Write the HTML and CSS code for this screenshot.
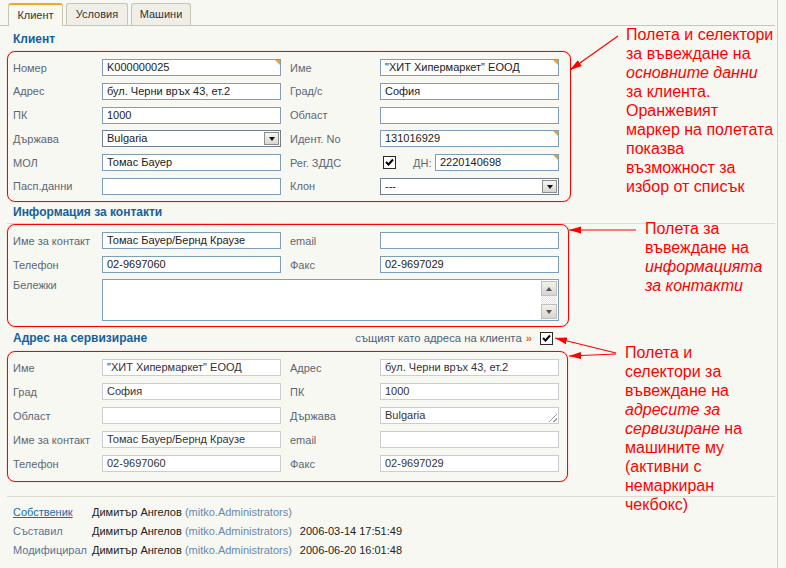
FILE: index.html
```html
<!DOCTYPE html>
<html lang="bg">
<head>
<meta charset="utf-8">
<title>Клиент</title>
<link rel="stylesheet" href="styles.css">
</head>
<body>
<div class="page">
  <div class="tabs">
    <div class="tab active">Клиент</div>
    <div class="tab w62">Условия</div>
    <div class="tab w60">Машини</div>
  </div>
  <div class="content">
    <div class="sec-head h1"><h2>Клиент</h2></div>
    <div class="box b1">
      <div class="grid">
        <span class="lbl">Номер</span><div class="in mark">K000000025</div>
        <span class="lbl">Име</span><div class="in mark">"ХИТ Хипермаркет" ЕООД</div>

        <span class="lbl">Адрес</span><div class="in">бул. Черни връх 43, ет.2</div>
        <span class="lbl">Град/с</span><div class="in">София</div>

        <span class="lbl">ПК</span><div class="in">1000</div>
        <span class="lbl">Област</span><div class="in"></div>

        <span class="lbl">Държава</span><div class="in sel">Bulgaria<span class="dd"></span></div>
        <span class="lbl">Идент. No</span><div class="in mark">131016929</div>

        <span class="lbl">МОЛ</span><div class="in">Томас Бауер</div>
        <span class="lbl">Рег. ЗДДС</span>
        <div class="vat">
          <span class="cb"><svg width="11" height="11" viewBox="0 0 11 11"><path d="M2 5 L4.5 7.5 L9 2.5" fill="none" stroke="#000" stroke-width="2"/></svg></span>
          <span class="lbl dn">ДН:</span>
          <div class="in mark short">2220140698</div>
        </div>

        <span class="lbl">Пасп.данни</span><div class="in"></div>
        <span class="lbl">Клон</span><div class="in sel">---<span class="dd"></span></div>
      </div>
    </div>

    <div class="sec-head h2l"><h2>Информация за контакти</h2></div>
    <div class="box b2">
      <div class="grid">
        <span class="lbl">Име за контакт</span><div class="in">Томас Бауер/Бернд Краузе</div>
        <span class="lbl">email</span><div class="in"></div>

        <span class="lbl">Телефон</span><div class="in">02-9697060</div>
        <span class="lbl">Факс</span><div class="in">02-9697029</div>

        <span class="lbl top">Бележки</span>
        <div class="ta">
          <div class="sb">
            <span class="sbtn up"></span>
            <span class="track"></span>
            <span class="sbtn down"></span>
          </div>
        </div>
      </div>
    </div>

    <div class="sec-head h3">
      <h2>Адрес на сервизиране</h2>
      <div class="same">
        <span>същият като адреса на клиента</span><span class="raquo">»</span>
        <span class="cb"><svg width="11" height="11" viewBox="0 0 11 11"><path d="M2 5 L4.5 7.5 L9 2.5" fill="none" stroke="#000" stroke-width="2"/></svg></span>
      </div>
    </div>
    <div class="box b3">
      <div class="grid dis">
        <span class="lbl">Име</span><div class="in">"ХИТ Хипермаркет" ЕООД</div>
        <span class="lbl">Адрес</span><div class="in">бул. Черни връх 43, ет.2</div>

        <span class="lbl">Град</span><div class="in">София</div>
        <span class="lbl">ПК</span><div class="in">1000</div>

        <span class="lbl">Област</span><div class="in"></div>
        <span class="lbl">Държава</span><div class="in grip">Bulgaria</div>

        <span class="lbl">Име за контакт</span><div class="in">Томас Бауер/Бернд Краузе</div>
        <span class="lbl">email</span><div class="in"></div>

        <span class="lbl">Телефон</span><div class="in">02-9697060</div>
        <span class="lbl">Факс</span><div class="in">02-9697029</div>
      </div>
    </div>

    <div class="meta">
      <a class="owner" href="#">Собственик</a>
      <span class="who">Димитър Ангелов <span class="grp">(mitko.Administrators)</span></span>
      <span></span>

      <span class="mlbl">Съставил</span>
      <span class="who">Димитър Ангелов <span class="grp">(mitko.Administrators)</span></span>
      <span class="when">2006-03-14 17:51:49</span>

      <span class="mlbl">Модифицирал</span>
      <span class="who">Димитър Ангелов <span class="grp">(mitko.Administrators)</span></span>
      <span class="when">2006-06-20 16:01:48</span>
    </div>
  </div>
</div>

<div class="note n1">Полета и селектори<br>за въвеждане на<br><em>основните данни</em><br>за клиента.<br>Оранжевият<br>маркер на полетата<br>показва<br>възможност за<br>избор от списък</div>
<div class="note n2">Полета за<br>въвеждане на<br><em>информацията</em><br><em>за контакти</em></div>
<div class="note n3">Полета и<br>селектори за<br>въвеждане на<br><em>адресите за</em><br><em>сервизиране</em> на<br>машините му<br>(активни с<br>немаркиран<br>чекбокс)</div>

<svg class="arrows" width="786" height="568" viewBox="0 0 786 568">
  <defs>
    <marker id="ah" markerWidth="13" markerHeight="8" refX="12" refY="3.5" orient="auto" markerUnits="userSpaceOnUse">
      <path d="M0,0 L12,3.5 L0,7 z" fill="#ff0000"/>
    </marker>
  </defs>
  <line x1="618" y1="36" x2="570" y2="70" stroke="#ff0000" stroke-width="1.2" marker-end="url(#ah)"/>
  <line x1="636" y1="230" x2="569" y2="230" stroke="#ff0000" stroke-width="1.2" marker-end="url(#ah)"/>
  <line x1="616" y1="353" x2="555" y2="338" stroke="#ff0000" stroke-width="1.2" marker-end="url(#ah)"/>
  <line x1="616" y1="354" x2="569" y2="356" stroke="#ff0000" stroke-width="1.2" marker-end="url(#ah)"/>
</svg>
</body>
</html>
```

FILE: styles.css
```css
* { box-sizing: border-box; }

html, body { margin: 0; padding: 0; }

body {
  position: relative;
  width: 786px;
  height: 568px;
  overflow: hidden;
  background: #f8f8f3;
  font-family: "Liberation Sans", Arial, sans-serif;
  font-size: 11px;
  color: #222;
}

.page {
  width: 778px;
  height: 568px;
  border-right: 1px solid #d6d4ca;
}

/* tabs */
.tabs {
  display: flex;
  gap: 3px;
  height: 26px;
  margin-right: 2px;
  padding: 3px 0 0 8px;
  border-bottom: 1px solid #c9c5b5;
}

.tab {
  width: 55px;
  height: 22px;
  line-height: 21px;
  text-align: center;
  color: #333;
  background: #f0efe7;
  border: 1px solid #c8c4b2;
  border-bottom: none;
  border-radius: 3px 3px 0 0;
}

.tab.w62 { width: 62px; }
.tab.w60 { width: 60px; }

.tab.active {
  height: 23px;
  line-height: 20px;
  margin-bottom: -1px;
  background: #f8f8f3;
  border-top: 2px solid #f5a623;
}

/* content */
.content { padding-left: 7px; }

.sec-head {
  display: flex;
  align-items: center;
  justify-content: space-between;
  padding-left: 6px;
}

.sec-head h2 {
  margin: 0;
  font-size: 12px;
  line-height: 14px;
  font-weight: bold;
  color: #15609b;
}

.h1 { padding-top: 6px; margin-bottom: 5px; }

.h2l {
  padding-top: 3px;
  padding-bottom: 4px;
  margin-right: 2px;
  margin-bottom: 1px;
  border-bottom: 1px solid #deddd4;
}

.h2l + .box { margin-top: -1px; }

.h3 {
  width: 546px;
  padding-top: 4px;
  margin-bottom: 6px;
}

.same {
  display: flex;
  align-items: center;
  color: #4f6177;
  font-size: 11.3px;
}

.raquo {
  margin-left: 4px;
  color: #f0641e;
  font-weight: bold;
}

.box {
  border: 1px solid #ff0000;
  border-radius: 8px;
  box-shadow: 0 0 1px rgba(255, 0, 0, 0.7);
  padding: 7px 0 4px 5px;
}

.b1 { width: 564px; height: 151px; }
.b2 { width: 562px; height: 103px; }
.b3 { width: 561px; height: 131px; }

.grid {
  display: grid;
  grid-template-columns: 89px 188px 90px 179px;
  grid-auto-rows: 17px;
  row-gap: 7px;
  align-items: center;
}

.b1 .grid { row-gap: 6.8px; }

.lbl { color: #5d6772; white-space: nowrap; }

.lbl.top {
  align-self: start;
  line-height: 13px;
  margin-top: -1px;
}

.in {
  position: relative;
  width: 179px;
  height: 17px;
  padding: 0 4px;
  line-height: 15px;
  background: #fff;
  border: 1px solid #7f9db9;
  color: #222;
  white-space: nowrap;
  overflow: hidden;
}

.in.short { width: 124px; }

.mark::after {
  content: "";
  position: absolute;
  top: 0;
  right: 0;
  border-top: 5px solid #f5a020;
  border-left: 5px solid transparent;
}

.sel {
  border-color: #6f7f8e;
  padding-right: 1px;
}

.dd {
  position: absolute;
  top: 1px;
  right: 1px;
  width: 15px;
  height: 13px;
  background: linear-gradient(#f6f6f2, #d9d8d0);
  border: 1px solid #8f8f88;
}

.dd::after {
  content: "";
  position: absolute;
  left: 4px;
  top: 4px;
  border-top: 4px solid #111;
  border-left: 3px solid transparent;
  border-right: 3px solid transparent;
}

.vat {
  display: flex;
  align-items: center;
  padding-left: 3px;
}

.cb {
  display: flex;
  align-items: center;
  justify-content: center;
  width: 13px;
  height: 13px;
  background: #fff;
  border: 1px solid #2a2a2a;
}

.same .cb { margin-left: 8px; }

.lbl.dn { margin-left: 17px; width: 22px; }

/* notes textarea */
.ta {
  grid-column: 2 / 5;
  align-self: start;
  height: 42px;
  margin-top: -1px;
  display: flex;
  justify-content: flex-end;
  background: #fff;
  border: 1px solid #7f9db9;
}

.sb {
  display: flex;
  flex-direction: column;
  width: 16px;
  margin: 1px 1px 1px 0;
  background: repeating-conic-gradient(#e4e3dc 0 25%, #fff 0 50%) 0 0 / 2px 2px;
}

.sbtn {
  position: relative;
  height: 15px;
  background: linear-gradient(#f2f1ea, #d7d6cd);
  border: 1px solid #c2c0b6;
}

.track { flex: 1; }

.sbtn::after {
  content: "";
  position: absolute;
  left: 4px;
  border-left: 3.5px solid transparent;
  border-right: 3.5px solid transparent;
}

.sbtn.up::after { top: 5px; border-bottom: 4px solid #555; }
.sbtn.down::after { top: 5px; border-top: 4px solid #555; }

/* service address (inactive) */
.b3 { padding-bottom: 8px; }

.dis .in {
  border-color: #c9ced5;
  color: #333;
}

.grip::after {
  content: "";
  position: absolute;
  right: 1px;
  bottom: 1px;
  width: 8px;
  height: 8px;
  background: linear-gradient(135deg, transparent 45%, #9a9a9a 45%, #9a9a9a 55%, transparent 55%, transparent 72%, #9a9a9a 72%, #9a9a9a 82%, transparent 82%);
}

/* meta footer */
.meta {
  display: grid;
  grid-template-columns: 79px max-content max-content;
  grid-auto-rows: 19px;
  align-items: center;
  margin-top: 14px;
  margin-right: 2px;
  padding: 5px 0 0 6px;
  border-top: 1px solid #dcdbd2;
}

.owner { color: #1d6aa8; text-decoration: underline; }
.mlbl { color: #5a7597; }
.who { color: #222; }
.grp { color: #6a87a9; }
.when { padding-left: 8px; color: #222; }

/* annotations */
.note {
  position: absolute;
  font-family: "Liberation Sans", Arial, sans-serif;
  font-size: 16px;
  line-height: 19px;
  color: #ff0000;
  white-space: nowrap;
}

.n1 { left: 626px; top: 25px; }
.n2 { left: 645px; top: 219px; }
.n3 { left: 625px; top: 343px; }

.arrows {
  position: absolute;
  left: 0;
  top: 0;
  pointer-events: none;
}
```
